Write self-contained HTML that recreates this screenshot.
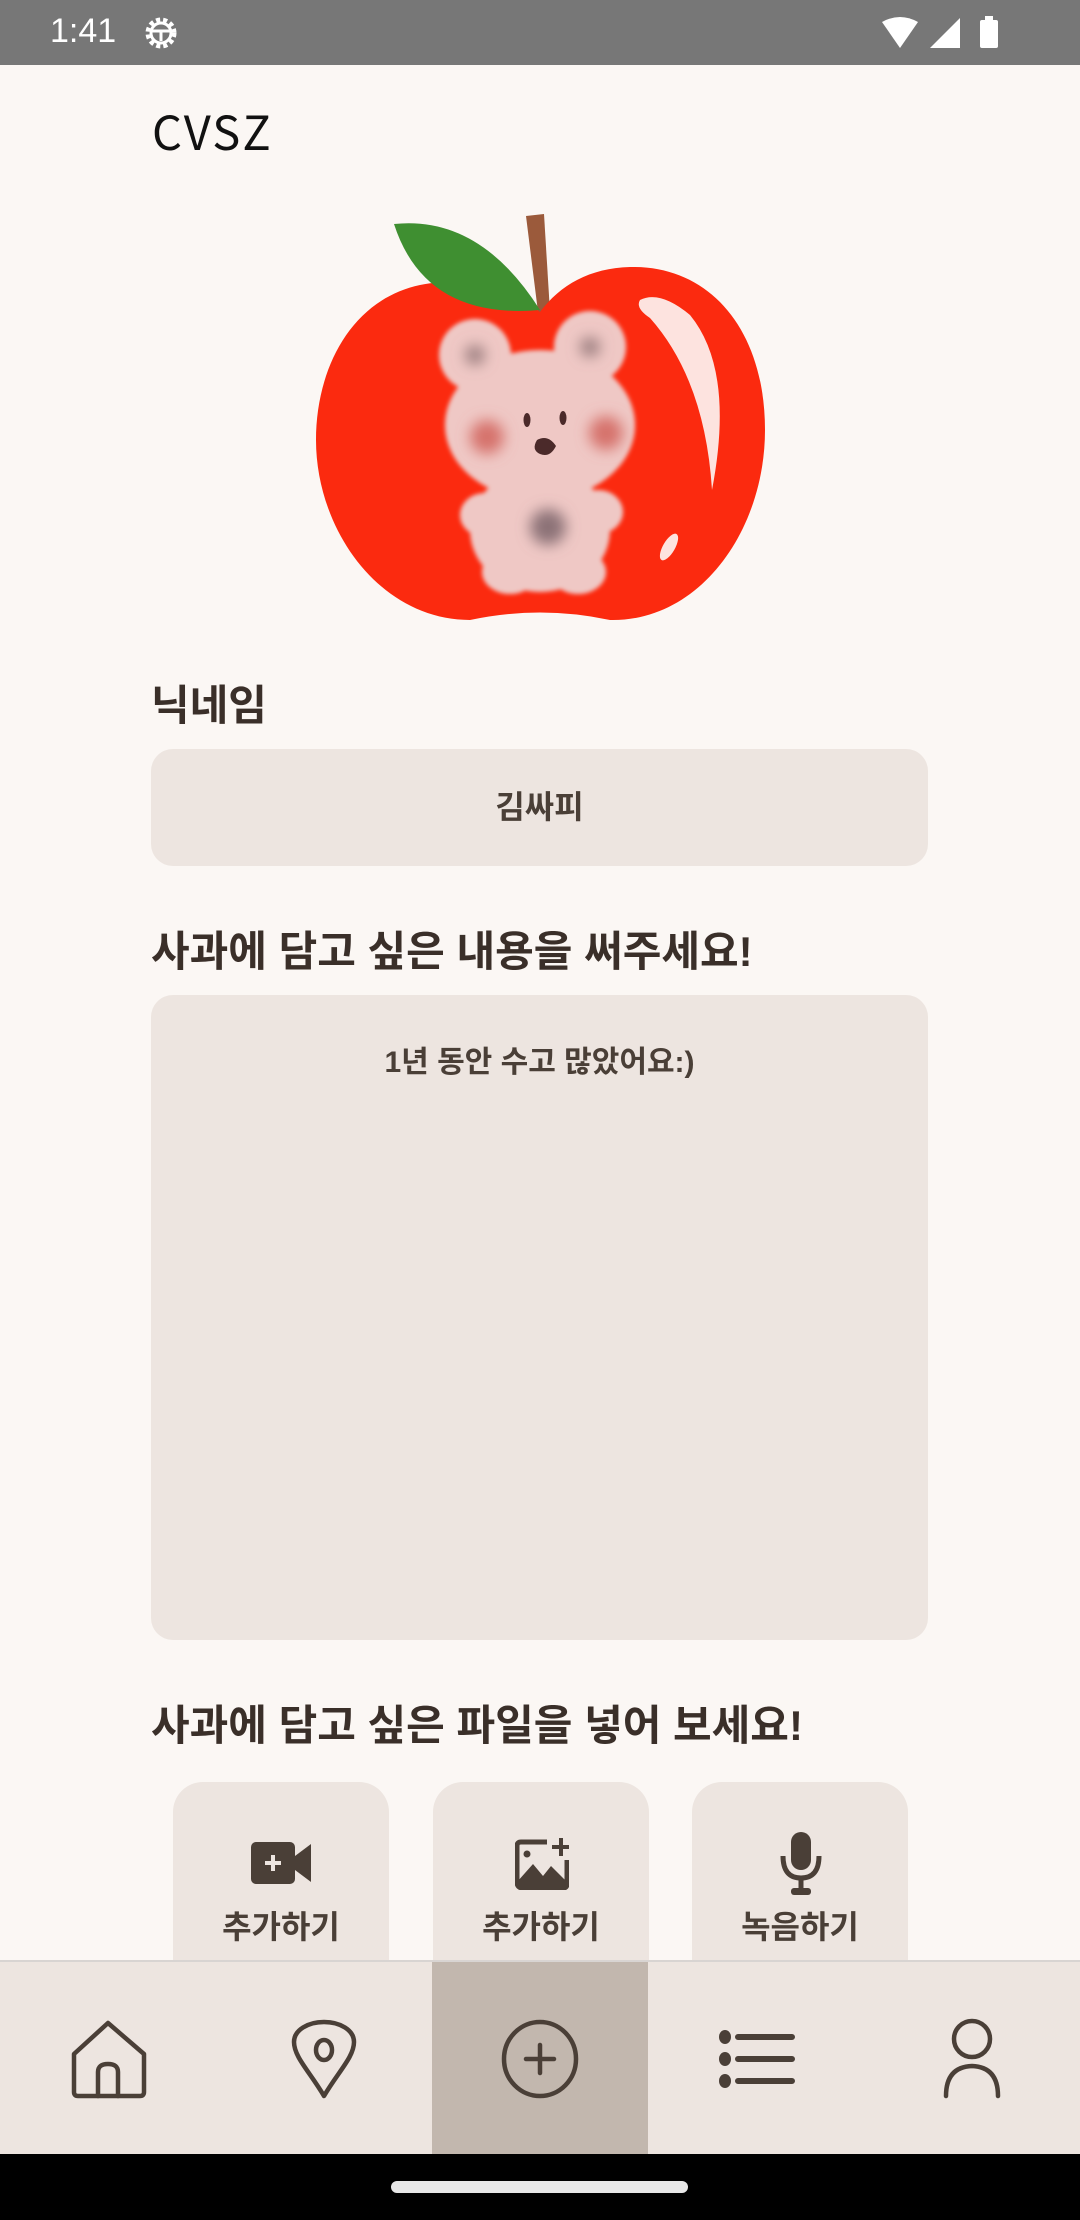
<!DOCTYPE html>
<html><head><meta charset="utf-8">
<style>
*{margin:0;padding:0;box-sizing:border-box}
body{width:1080px;height:2220px;background:#fbf7f4;position:relative;overflow:hidden;font-family:"Liberation Sans","Noto Sans CJK KR",sans-serif;color:#3e332c}
.abs{position:absolute}
.status{left:0;top:0;width:1080px;height:65px;background:#777}
.lbl{font-weight:700;font-size:42px;left:151px;color:#3a2f29}
.box{background:#ede5e0;border-radius:22px}
.btn{background:#ede5e0;border-radius:30px 30px 0 0;top:1782px;width:216px;height:178px}
.btn span{position:absolute;top:120px;left:0;width:100%;text-align:center;font-size:32px;font-weight:700;color:#4a3f37}
.nav{left:0;top:1960px;width:1080px;height:194px;background:#ede5e0;border-top:2px solid #d8d4d2}
</style></head><body>
<div class="abs status">
 <div class="abs" style="left:50px;top:12px;color:#fff;font-size:34px">1:41</div>
 <svg class="abs" style="left:142px;top:14px" width="38" height="38" viewBox="0 0 38 38"><circle cx="19" cy="19" r="13" fill="none" stroke="#fff" stroke-width="5" stroke-dasharray="4 3"/><circle cx="19" cy="19" r="10" fill="none" stroke="#fff" stroke-width="3"/><path d="M10 17h18M19 17v10" stroke="#fff" stroke-width="3"/></svg>
 <svg class="abs" style="left:880px;top:16px" width="130" height="34" viewBox="0 0 130 34"><path d="M2 6 Q20 -4 38 6 L20 32Z" fill="#fff"/><path d="M80 2 L80 32 L50 32Z" fill="#fff"/><rect x="100" y="4" width="18" height="28" rx="2" fill="#fff"/><rect x="105" y="0" width="8" height="5" fill="#fff"/></svg>
</div>
<div class="abs" style="left:152px;top:102px;font-size:47px;color:#111;letter-spacing:2px;font-family:'Noto Sans CJK KR',sans-serif;line-height:1.2">CVSZ</div>
<svg class="abs" style="left:300px;top:205px" width="480" height="430" viewBox="300 205 480 430">
 <defs><filter id="b"><feGaussianBlur stdDeviation="2"/></filter><filter id="b2"><feGaussianBlur stdDeviation="7"/></filter></defs>
 <path d="M526 216 L544 214 L550 312 L538 312Z" fill="#9b5a3b"/>
 <path d="M540 312 C510 285 470 275 420 285 C350 300 316 370 316 440 C316 530 380 620 470 620 Q540 605 610 620 C700 622 765 530 765 430 C765 330 710 265 630 267 C590 268 560 285 540 312Z" fill="#fb2a0f"/>
 <path d="M394 224 Q480 215 540 310 Q425 320 394 224Z" fill="#3f8f31"/>
 <path d="M640 300 Q660 290 690 315 Q735 370 712 490 Q705 380 650 318 Q635 308 640 300Z" fill="#fde3df"/>
 <ellipse cx="669" cy="547" rx="6" ry="15" fill="#fde3df" transform="rotate(30 669 547)"/>
 <g fill="#efc8c5" filter="url(#b)">
  <circle cx="475" cy="355" r="36"/><circle cx="590" cy="347" r="36"/>
  <ellipse cx="540" cy="425" rx="95" ry="75"/>
  <ellipse cx="540" cy="530" rx="70" ry="62"/>
  <ellipse cx="485" cy="515" rx="25" ry="22"/><ellipse cx="598" cy="512" rx="25" ry="22"/>
  <ellipse cx="510" cy="572" rx="28" ry="22"/><ellipse cx="578" cy="572" rx="28" ry="22"/>
 </g>
 <g filter="url(#b2)"><circle cx="487" cy="437" r="17" fill="#d6726c"/><circle cx="606" cy="433" r="17" fill="#d6726c"/><circle cx="548" cy="527" r="18" fill="#8c7277"/><circle cx="475" cy="355" r="10" fill="#9c7f80"/><circle cx="590" cy="347" r="10" fill="#9c7f80"/></g>
 <ellipse cx="527" cy="420" rx="3.5" ry="7" fill="#4b2a2a"/><ellipse cx="563" cy="418" rx="3.5" ry="7" fill="#4b2a2a"/>
 <path d="M537 440 Q548 434 556 446 Q550 458 540 454 Q531 450 537 440Z" fill="#4b2a2a"/>
</svg>
<div class="abs lbl" style="top:672px">닉네임</div>
<div class="abs box" style="left:151px;top:749px;width:777px;height:117px"><div style="text-align:center;line-height:117px;font-size:32px;font-weight:700;color:#4a3f37">김싸피</div></div>
<div class="abs lbl" style="top:918px">사과에 담고 싶은 내용을 써주세요!</div>
<div class="abs box" style="left:151px;top:995px;width:777px;height:645px"><div style="text-align:center;padding-top:42px;font-size:30px;font-weight:700;color:#4a3f37">1년 동안 수고 많았어요:)</div></div>
<div class="abs lbl" style="top:1692px">사과에 담고 싶은 파일을 넣어 보세요!</div>
<div class="abs btn" style="left:173px">
 <svg class="abs" style="left:78px;top:60px" width="62" height="42" viewBox="0 0 62 42"><rect x="0" y="0" width="44" height="42" rx="5" fill="#4a3f37"/><path d="M44 14 L60 2 L60 40 L44 28Z" fill="#4a3f37"/><path d="M22 13v16M14 21h16" stroke="#ede5e0" stroke-width="4"/></svg>
 <span>추가하기</span></div>
<div class="abs btn" style="left:433px">
 <svg class="abs" style="left:82px;top:56px" width="54" height="52" viewBox="0 0 54 52"><path d="M32 4 H6 Q2 4 2 8 V44 Q2 50 8 50 H48 Q52 50 52 46 V22" fill="none" stroke="#4a3f37" stroke-width="5"/><path d="M2 44 L18 26 L28 38 L36 28 L52 44 V50 H2Z" fill="#4a3f37"/><circle cx="12" cy="16" r="3.5" fill="#4a3f37"/><path d="M46 0v18M37 9h18" stroke="#4a3f37" stroke-width="4"/></svg>
 <span>추가하기</span></div>
<div class="abs btn" style="left:692px">
 <svg class="abs" style="left:86px;top:48px" width="46" height="66" viewBox="0 0 46 66"><rect x="13" y="2" width="20" height="38" rx="10" fill="#4a3f37"/><path d="M5 26 Q5 48 23 48 Q41 48 41 26" fill="none" stroke="#4a3f37" stroke-width="5"/><path d="M23 48v12" stroke="#4a3f37" stroke-width="5"/><rect x="13" y="58" width="20" height="7" rx="3" fill="#4a3f37"/></svg>
 <span>녹음하기</span></div>
<div class="abs nav">
 <div class="abs" style="left:432px;top:0;width:216px;height:194px;background:#c2b7ae"></div>
 <svg class="abs" style="left:0;top:0" width="1080" height="194" viewBox="0 1960 1080 194" fill="none" stroke="#4a3f37" stroke-width="4.5" stroke-linejoin="round" stroke-linecap="round">
  <path d="M108 2021 L74 2052 V2090 Q74 2094 78 2094 H140 Q144 2094 144 2090 V2052 Z"/><path d="M98 2094 V2070 Q98 2062 108 2062 Q118 2062 118 2070 V2094"/>
  <path d="M324 2094 C310 2070 294 2055 294 2040 C294 2028 308 2020 324 2020 C340 2020 354 2028 354 2040 C354 2055 338 2070 324 2094Z"/><ellipse cx="324" cy="2048" rx="8" ry="10"/>
  <ellipse cx="540" cy="2057" rx="36" ry="37"/><path d="M540 2043 V2071 M526 2057 H554"/>
  <path d="M738 2035 H792 M738 2057 H792 M738 2079 H792" stroke-width="6"/>
  <g fill="#4a3f37" stroke="none"><ellipse cx="725" cy="2035" rx="6" ry="7"/><ellipse cx="725" cy="2057" rx="6" ry="7"/><ellipse cx="725" cy="2079" rx="6" ry="7"/></g>
  <ellipse cx="972" cy="2037" rx="18" ry="18"/><path d="M946 2094 Q946 2065 972 2064 Q998 2065 998 2094"/>
 </svg>
</div>
<div class="abs" style="left:0;top:2154px;width:1080px;height:66px;background:#000"></div>
<div class="abs" style="left:391px;top:2181px;width:297px;height:12px;border-radius:6px;background:#e8e8e8"></div>
</body></html>
